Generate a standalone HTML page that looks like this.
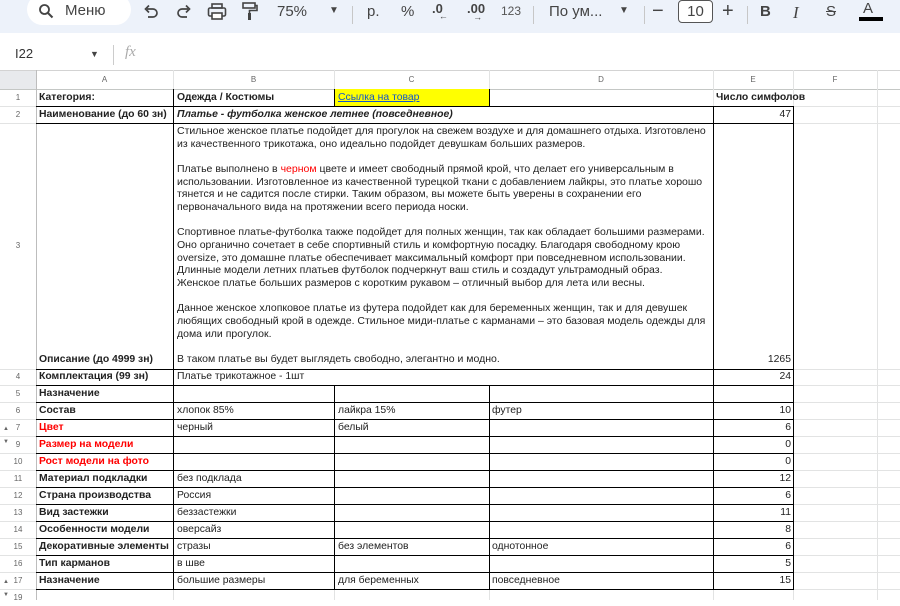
<!DOCTYPE html>
<html><head><meta charset="utf-8"><style>
*{margin:0;padding:0;box-sizing:border-box}
body{width:900px;height:600px;overflow:hidden;background:#fff;font-family:"Liberation Sans",Arial,sans-serif;position:relative;color:#222}
.a{position:absolute}
.tb{color:#444;font-size:15px;position:absolute;top:4px;white-space:nowrap}
.gh{position:absolute;height:1px;background:#e2e3e3;left:0;width:900px}
.gv{position:absolute;width:1px;background:#e2e3e3;top:70px;height:530px}
.bh{position:absolute;height:1px;background:#000;left:36px;width:758px}
.bv{position:absolute;width:1px;background:#000}
.t{position:absolute;font-size:10.4px;line-height:17px;white-space:nowrap;color:#222}
.b{font-weight:bold}
.r{color:#ff0000}
.rn{position:absolute;left:0;width:36px;text-align:center;font-size:8px;color:#666;line-height:17px}
.ch{position:absolute;top:70px;height:19px;line-height:19px;text-align:center;font-size:8px;color:#666}
.num{position:absolute;left:713px;width:78px;text-align:right;font-size:10.4px;line-height:17px}
.ar{position:absolute;left:3px;font-size:6px;color:#666}
.w{position:absolute;background:#fff}
</style></head><body>
<!-- toolbar -->
<div class="a" style="left:0;top:0;width:900px;height:33px;background:#edf2fa"></div>
<div class="a" style="left:27px;top:-6px;width:104px;height:31px;background:#fff;border-radius:16px"></div>
<svg class="a" style="left:38px;top:3px" width="16" height="16" viewBox="0 0 16 16"><circle cx="6.5" cy="6.5" r="4.5" fill="none" stroke="#444" stroke-width="1.8"/><path d="M10 10l4.5 4.5" stroke="#444" stroke-width="2"/></svg>
<div class="tb" style="left:65px;top:2px;font-size:15px">Меню</div>
<svg class="a" style="left:143px;top:4px" width="16" height="16" viewBox="0 0 16 16"><path d="M4 5h6a4 4 0 0 1 0 8H5" fill="none" stroke="#444" stroke-width="1.7"/><path d="M6 1.5L2.5 5 6 8.5" fill="none" stroke="#444" stroke-width="1.7"/></svg>
<svg class="a" style="left:176px;top:4px" width="16" height="16" viewBox="0 0 16 16"><path d="M12 5H6a4 4 0 0 0 0 8h5" fill="none" stroke="#444" stroke-width="1.7"/><path d="M10 1.5l3.5 3.5L10 8.5" fill="none" stroke="#444" stroke-width="1.7"/></svg>
<svg class="a" style="left:207px;top:3px" width="20" height="18" viewBox="0 0 20 18"><rect x="5" y="1" width="10" height="4" fill="none" stroke="#444" stroke-width="1.6"/><rect x="1.5" y="5" width="17" height="8" rx="1.5" fill="none" stroke="#444" stroke-width="1.6"/><rect x="5" y="10" width="10" height="6" fill="#fff" stroke="#444" stroke-width="1.6"/></svg>
<svg class="a" style="left:242px;top:2px" width="16" height="20" viewBox="0 0 16 20"><rect x="1" y="1" width="12" height="5" fill="none" stroke="#444" stroke-width="1.6"/><path d="M13 3.5h2v5H7.5v3" fill="none" stroke="#444" stroke-width="1.6"/><rect x="6" y="11" width="3" height="7" fill="#444"/></svg>
<div class="tb" style="left:277px;top:3px">75%</div>
<div class="tb" style="left:329px;top:5px;font-size:10px">▼</div>
<div class="a" style="left:352px;top:6px;width:1px;height:18px;background:#c7c7c7"></div>
<div class="tb" style="left:367px;top:3px">р.</div>
<div class="tb" style="left:401px;top:3px">%</div>
<div class="tb" style="left:432px;top:1px;font-size:13px;font-weight:bold">.0<span style="font-size:9px;position:relative;left:-4px;top:6px">←</span></div>
<div class="tb" style="left:467px;top:1px;font-size:13px;font-weight:bold">.00<span style="font-size:9px;position:relative;left:-12px;top:7px">→</span></div>
<div class="tb" style="left:501px;top:4px;font-size:12px;color:#555">123</div>
<div class="a" style="left:533px;top:6px;width:1px;height:18px;background:#c7c7c7"></div>
<div class="tb" style="left:549px;top:3px">По ум...</div>
<div class="tb" style="left:619px;top:5px;font-size:10px">▼</div>
<div class="a" style="left:644px;top:6px;width:1px;height:18px;background:#c7c7c7"></div>
<div class="tb" style="left:652px;top:0px;font-size:20px">−</div>
<div class="a" style="left:678px;top:0px;width:35px;height:23px;border:1px solid #555;border-radius:4px;background:#fff;font-size:15px;text-align:center;line-height:21px;color:#444">10</div>
<div class="tb" style="left:722px;top:0px;font-size:20px">+</div>
<div class="a" style="left:747px;top:6px;width:1px;height:18px;background:#c7c7c7"></div>
<div class="tb" style="left:760px;top:3px;font-weight:bold">B</div>
<div class="tb" style="left:793px;top:3px;font-style:italic;font-family:'Liberation Serif',serif;font-size:17px">I</div>
<div class="tb" style="left:826px;top:3px;text-decoration:line-through">S</div>
<div class="tb" style="left:863px;top:0px">A</div>
<div class="a" style="left:859px;top:17px;width:24px;height:4px;background:#000"></div>
<!-- formula bar -->
<div class="a" style="left:15px;top:46px;font-size:13px;color:#333">I22</div>
<div class="a" style="left:90px;top:49px;font-size:9px;color:#444">▼</div>
<div class="a" style="left:113px;top:45px;width:1px;height:20px;background:#ccc"></div>
<div class="a" style="left:125px;top:44px;font-size:15px;font-style:italic;color:#aaa;font-family:'Liberation Serif',serif">fx</div>
<!-- headers -->
<div class="a" style="left:0;top:70px;width:36px;height:19px;background:#e8eaed"></div>
<div class="a" style="left:36px;top:70px;width:864px;height:19px;background:#fff"></div>
<div class="gh" style="top:70px;background:#d3d3d3"></div>
<div class="gh" style="top:89px;background:#c4c7c5"></div>
<div class="ch" style="left:36px;width:137px">A</div>
<div class="ch" style="left:173px;width:161px">B</div>
<div class="ch" style="left:334px;width:155px">C</div>
<div class="ch" style="left:489px;width:224px">D</div>
<div class="ch" style="left:713px;width:80px">E</div>
<div class="ch" style="left:793px;width:84px">F</div>
<!-- gray grid -->
<div class="gv" style="left:36px;background:#bdbdbd"></div>
<div class="gv" style="left:173px"></div><div class="gv" style="left:334px"></div><div class="gv" style="left:489px"></div>
<div class="gv" style="left:713px"></div><div class="gv" style="left:793px"></div><div class="gv" style="left:877px"></div>
<div class="gh" style="top:106px"></div><div class="gh" style="top:123px"></div><div class="gh" style="top:369px"></div>
<div class="gh" style="top:385px"></div><div class="gh" style="top:402px"></div><div class="gh" style="top:419px"></div>
<div class="gh" style="top:436px"></div><div class="gh" style="top:453px"></div><div class="gh" style="top:470px"></div>
<div class="gh" style="top:487px"></div><div class="gh" style="top:504px"></div><div class="gh" style="top:521px"></div>
<div class="gh" style="top:538px"></div><div class="gh" style="top:555px"></div><div class="gh" style="top:572px"></div>
<div class="gh" style="top:589px"></div>
<!-- merged cover -->
<div class="w" style="left:174px;top:107px;width:539px;height:278px"></div>
<!-- yellow -->
<div class="a" style="left:334px;top:89px;width:155px;height:17px;background:#ffff00"></div>
<!-- black lines -->
<div class="bh" style="top:106px"></div><div class="bh" style="top:123px"></div><div class="bh" style="top:369px"></div>
<div class="bh" style="top:385px"></div><div class="bh" style="top:402px"></div><div class="bh" style="top:419px"></div>
<div class="bh" style="top:436px"></div><div class="bh" style="top:453px"></div><div class="bh" style="top:470px"></div>
<div class="bh" style="top:487px"></div><div class="bh" style="top:504px"></div><div class="bh" style="top:521px"></div>
<div class="bh" style="top:538px"></div><div class="bh" style="top:555px"></div><div class="bh" style="top:572px"></div>
<div class="bh" style="top:589px"></div>
<div class="bv" style="left:173px;top:89px;height:501px"></div>
<div class="bv" style="left:334px;top:89px;height:17px"></div>
<div class="bv" style="left:489px;top:89px;height:17px"></div>
<div class="bv" style="left:334px;top:385px;height:205px"></div>
<div class="bv" style="left:489px;top:385px;height:205px"></div>
<div class="bv" style="left:713px;top:106px;height:484px"></div>
<div class="bv" style="left:793px;top:106px;height:484px"></div>
<!-- row numbers -->
<div class="rn" style="top:89px">1</div><div class="rn" style="top:106px">2</div><div class="rn" style="top:237px">3</div>
<div class="rn" style="top:368px">4</div><div class="rn" style="top:385px">5</div><div class="rn" style="top:402px">6</div>
<div class="rn" style="top:419px">7</div><div class="rn" style="top:436px">9</div><div class="rn" style="top:453px">10</div>
<div class="rn" style="top:470px">11</div><div class="rn" style="top:487px">12</div><div class="rn" style="top:504px">13</div>
<div class="rn" style="top:521px">14</div><div class="rn" style="top:538px">15</div><div class="rn" style="top:555px">16</div>
<div class="rn" style="top:572px">17</div><div class="rn" style="top:589px">19</div>
<div class="ar" style="top:426px">▲</div><div class="ar" style="top:439px">▼</div>
<div class="ar" style="top:579px">▲</div><div class="ar" style="top:592px">▼</div>
<!-- column A -->
<div class="t b" style="left:39px;top:89px">Категория:</div>
<div class="t b" style="left:39px;top:106px">Наименование (до 60 зн)</div>
<div class="t b" style="left:39px;top:351px">Описание (до 4999 зн)</div>
<div class="t b" style="left:39px;top:368px">Комплектация (99 зн)</div>
<div class="t b" style="left:39px;top:385px">Назначение</div>
<div class="t b" style="left:39px;top:402px">Состав</div>
<div class="t b r" style="top:419px;left:39px">Цвет</div>
<div class="t b r" style="top:436px;left:39px">Размер на модели</div>
<div class="t b r" style="top:453px;left:39px">Рост модели на фото</div>
<div class="t b" style="left:39px;top:470px">Материал подкладки</div>
<div class="t b" style="left:39px;top:487px">Страна производства</div>
<div class="t b" style="left:39px;top:504px">Вид застежки</div>
<div class="t b" style="left:39px;top:521px">Особенности модели</div>
<div class="t b" style="left:39px;top:538px">Декоративные элементы</div>
<div class="t b" style="left:39px;top:555px">Тип карманов</div>
<div class="t b" style="left:39px;top:572px">Назначение</div>
<!-- B.. -->
<div class="t b" style="left:177px;top:89px">Одежда / Костюмы</div>
<div class="t" style="left:338px;top:89px;color:#1155cc;text-decoration:underline">Ссылка на товар</div>
<div class="t b" style="left:716px;top:89px">Число симфолов</div>
<div class="t b" style="left:177px;top:106px;font-style:italic">Платье - футболка женское летнее (повседневное)</div>
<div class="t" style="left:177px;top:125px;line-height:12.67px;font-size:10.5px">Стильное женское платье подойдет для прогулок на свежем воздухе и для домашнего отдыха. Изготовлено<br>из качественного трикотажа, оно идеально подойдет девушкам больших размеров.<br><br>Платье выполнено в <span class="r">черном</span> цвете и имеет свободный прямой крой, что делает его универсальным в<br>использовании. Изготовленное из качественной турецкой ткани с добавлением лайкры, это платье хорошо<br>тянется и не садится после стирки. Таким образом, вы можете быть уверены в сохранении его<br>первоначального вида на протяжении всего периода носки.<br><br>Спортивное платье-футболка также подойдет для полных женщин, так как обладает большими размерами.<br>Оно органично сочетает в себе спортивный стиль и комфортную посадку. Благодаря свободному крою<br>oversize, это домашне платье обеспечивает максимальный комфорт при повседневном использовании.<br>Длинные модели летних платьев футболок подчеркнут ваш стиль и создадут ультрамодный образ.<br>Женское платье больших размеров с коротким рукавом – отличный выбор для лета или весны.<br><br>Данное женское хлопковое платье из футера подойдет как для беременных женщин, так и для девушек<br>любящих свободный крой в одежде. Стильное миди-платье с карманами – это базовая модель одежды для<br>дома или прогулок.<br><br>В таком платье вы будет выглядеть свободно, элегантно и модно.</div>
<div class="t" style="left:177px;top:368px">Платье трикотажное - 1шт</div>
<div class="t" style="left:177px;top:402px">хлопок 85%</div><div class="t" style="left:338px;top:402px">лайкра 15%</div><div class="t" style="left:492px;top:402px">футер</div>
<div class="t" style="left:177px;top:419px">черный</div><div class="t" style="left:338px;top:419px">белый</div>
<div class="t" style="left:177px;top:470px">без подклада</div>
<div class="t" style="left:177px;top:487px">Россия</div>
<div class="t" style="left:177px;top:504px">беззастежки</div>
<div class="t" style="left:177px;top:521px">оверсайз</div>
<div class="t" style="left:177px;top:538px">стразы</div><div class="t" style="left:338px;top:538px">без элементов</div><div class="t" style="left:492px;top:538px">однотонное</div>
<div class="t" style="left:177px;top:555px">в шве</div>
<div class="t" style="left:177px;top:572px">большие размеры</div><div class="t" style="left:338px;top:572px">для беременных</div><div class="t" style="left:492px;top:572px">повседневное</div>
<!-- numbers -->
<div class="num" style="top:106px">47</div><div class="num" style="top:351px">1265</div><div class="num" style="top:368px">24</div>
<div class="num" style="top:402px">10</div><div class="num" style="top:419px">6</div><div class="num" style="top:436px">0</div>
<div class="num" style="top:453px">0</div><div class="num" style="top:470px">12</div><div class="num" style="top:487px">6</div>
<div class="num" style="top:504px">11</div><div class="num" style="top:521px">8</div><div class="num" style="top:538px">6</div>
<div class="num" style="top:555px">5</div><div class="num" style="top:572px">15</div>
</body></html>
